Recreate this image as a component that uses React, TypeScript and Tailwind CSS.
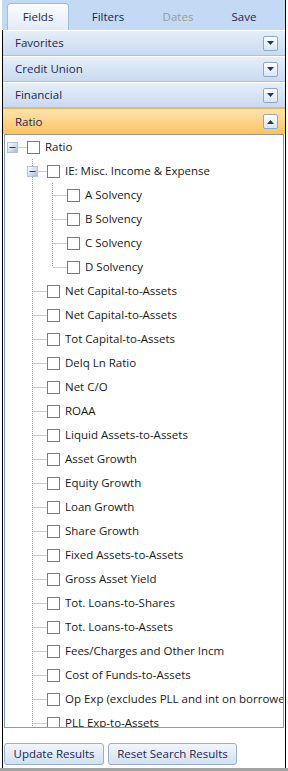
import React from "react";

type Item = { label: string; level: number; expander?: boolean; last?: boolean };

const level1 = [
  "Net Capital-to-Assets",
  "Net Capital-to-Assets",
  "Tot Capital-to-Assets",
  "Delq Ln Ratio",
  "Net C/O",
  "ROAA",
  "Liquid Assets-to-Assets",
  "Asset Growth",
  "Equity Growth",
  "Loan Growth",
  "Share Growth",
  "Fixed Assets-to-Assets",
  "Gross Asset Yield",
  "Tot. Loans-to-Shares",
  "Tot. Loans-to-Assets",
  "Fees/Charges and Other Incm",
  "Cost of Funds-to-Assets",
  "Op Exp (excludes PLL and int on borrowed funds)-to-Assets",
  "PLL Exp-to-Assets",
  "Int Exp-to-Assets",
];

const items: Item[] = [
  { label: "Ratio", level: 0, expander: true },
  { label: "IE: Misc. Income & Expense", level: 1, expander: true },
  { label: "A Solvency", level: 2 },
  { label: "B Solvency", level: 2 },
  { label: "C Solvency", level: 2 },
  { label: "D Solvency", level: 2, last: true },
  ...level1.map((l) => ({ label: l, level: 1 })),
];

function Gutter({ item }: { item: Item }) {
  const L = item.level;
  const w = 22 + 20 * L;
  const node = 7 + 20 * L + 0.5;
  const lines: React.ReactNode[] = [];
  for (let k = 1; k <= L; k++) {
    const x = 7 + 20 * k + 0.5;
    const isOwn = k === L;
    const y2 = isOwn && item.last ? 12 : 24;
    lines.push(
      <line key={k} x1={x} y1={0} x2={x} y2={y2} stroke="#9a9a9a" strokeWidth={1} strokeDasharray="1 1" />
    );
  }
  return (
    <svg width={w} height={24} className="shrink-0">
      {lines}
      <line x1={node + 1} y1={12.5} x2={w} y2={12.5} stroke="#9a9a9a" strokeWidth={1} strokeDasharray="1 1" />
      {item.expander && (
        <g>
          <defs>
            <linearGradient id={`eg${L}`} x1="0" y1="0" x2="1" y2="1">
              <stop offset="0" stopColor="#ffffff" />
              <stop offset="0.5" stopColor="#d7e2ee" />
              <stop offset="1" stopColor="#9fb3c9" />
            </linearGradient>
          </defs>
          <rect x={node - 5} y={7.5} width={10} height={10} fill={`url(#eg${L})`} stroke="#b4c3d4" strokeWidth={1} />
          <line x1={node - 3} y1={12.5} x2={node + 3} y2={12.5} stroke="#2b3f5c" strokeWidth={1} />
        </g>
      )}
    </svg>
  );
}

function Row({ item }: { item: Item }) {
  return (
    <div className="flex h-[24px] items-center whitespace-nowrap">
      <Gutter item={item} />
      <div className="w-[13px] h-[13px] shrink-0 border border-[#7c7c7c] bg-white" />
      <span className="ml-[5px] text-[11.5px] text-[#1a1a1a] leading-none">{item.label}</span>
    </div>
  );
}

function DropBtn({ up }: { up?: boolean }) {
  return (
    <div className="w-[15px] h-[15px] rounded-[2px] border border-[#8ea7c8] bg-gradient-to-b from-[#fdfeff] to-[#dbe6f4] flex items-center justify-center">
      <svg width="7" height="4" viewBox="0 0 7 4">
        {up ? <polygon points="0,4 7,4 3.5,0" fill="#203a63" /> : <polygon points="0,0 7,0 3.5,4" fill="#203a63" />}
      </svg>
    </div>
  );
}

function Header({ label, active }: { label: string; active?: boolean }) {
  return (
    <div
      className={
        active
          ? "h-[26px] flex items-center justify-between pl-[12px] pr-[7px] border-t border-[#f2b552] bg-gradient-to-b from-[#fee3ae] to-[#fcc35b]"
          : "h-[26px] flex items-center justify-between pl-[12px] pr-[7px] border-t border-white border-b border-b-[#a9c0de] bg-gradient-to-b from-[#e6eef9] to-[#c9daf0]"
      }
    >
      <span className="text-[11.5px] text-[#1e2558]">{label}</span>
      <DropBtn up={active} />
    </div>
  );
}

export default function App() {
  return (
    <div className="w-[288px] h-[771px] bg-white flex flex-col" style={{ fontFamily: '"Open Sans", "Noto Sans", sans-serif' }}>
      <div className="flex-1 ml-[2px] w-[284px] border-r border-black flex flex-col min-h-0">
        <div className="h-[30px] bg-[#c3d9f4] flex items-end pl-[5px] gap-[8px] shrink-0">
          <div className="w-[62px] h-[27px] rounded-t-[4px] border border-b-0 border-[#9fbbe0] bg-gradient-to-b from-[#fbfdff] to-[#e2ebf6] flex items-center justify-center text-[11.5px] text-[#1e2558]">
            Fields
          </div>
          <div className="w-[62px] h-[27px] flex items-center justify-center text-[11.5px] text-[#1e2558]">Filters</div>
          <div className="w-[62px] h-[27px] flex items-center justify-center text-[11.5px] text-[#9a9a9a]">Dates</div>
          <div className="w-[54px] h-[27px] flex items-center justify-center text-[11.5px] text-[#1e2558]">Save</div>
        </div>
        <div className="flex-1 border-l border-black flex flex-col min-h-0">
          <Header label="Favorites" />
          <Header label="Credit Union" />
          <Header label="Financial" />
          <Header label="Ratio" active />
          <div className="mx-[1px] h-[594px] border border-[#7f9db9] overflow-hidden bg-white shrink-0">
            {items.map((it, i) => (
              <Row key={i} item={it} />
            ))}
          </div>
          <div className="flex gap-[4px] pl-[1px] pt-[15px]">
            <button className="h-[22px] w-[100px] px-0 whitespace-nowrap rounded-[3px] border border-[#9aafcb] bg-gradient-to-b from-[#f2f6fb] to-[#d3e0f0] text-[11.5px] text-[#1e2558] flex items-center justify-center">
              Update Results
            </button>
            <button className="h-[22px] w-[129px] px-0 whitespace-nowrap rounded-[3px] border border-[#9aafcb] bg-gradient-to-b from-[#f2f6fb] to-[#d3e0f0] text-[11.5px] text-[#1e2558] flex items-center justify-center">
              Reset Search Results
            </button>
          </div>
        </div>
      </div>
      <div className="h-[3px] bg-[#a3a3a3] shrink-0" />
    </div>
  );
}
